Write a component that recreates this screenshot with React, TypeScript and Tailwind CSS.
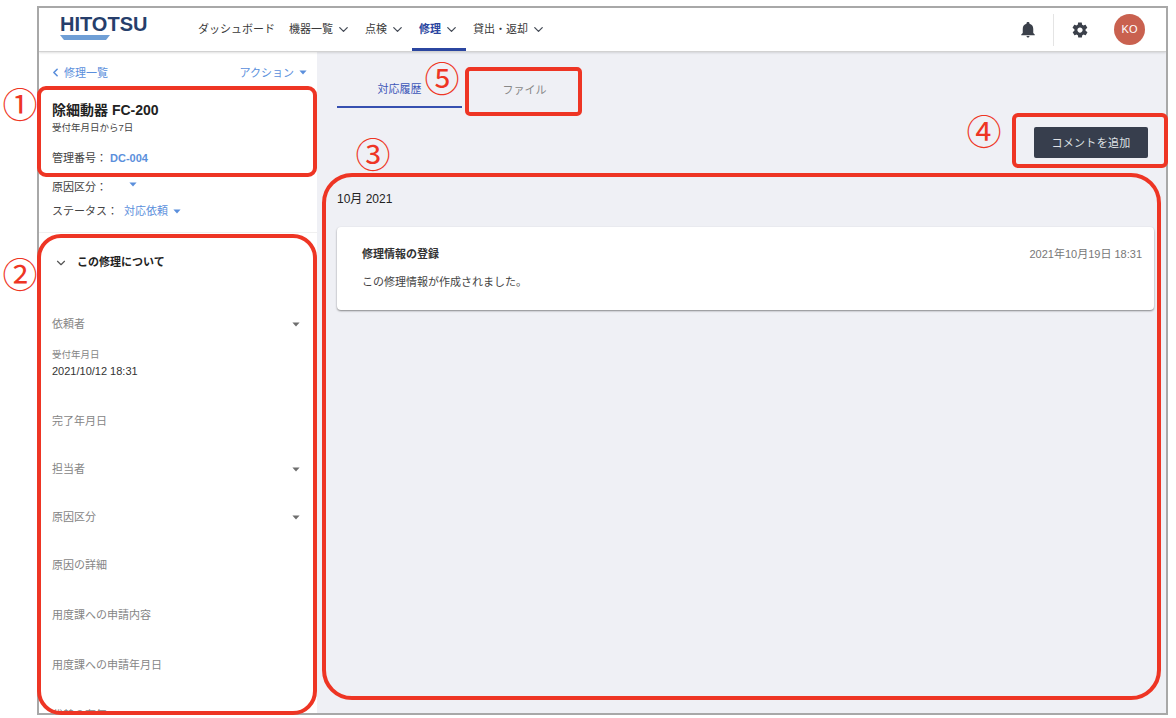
import React from "react";
import { ChevronDown, ChevronLeft } from "lucide-react";

const Caret = ({ className = "" }: { className?: string }) => (
  <svg viewBox="0 0 10 6" className={`h-[5px] w-[8px] ${className}`} fill="currentColor">
    <path d="M0.5 0.5h9L5 5.5z" />
  </svg>
);

const Bell = () => (
  <svg viewBox="0 0 24 24" className="h-[18px] w-[18px] text-[#3b404a]" fill="currentColor">
    <path d="M12 22c1.2 0 2-.9 2-2h-4c0 1.1.8 2 2 2zm7-6v-5.5c0-3.4-1.8-6.1-5-6.8V3c0-1-.9-1.6-2-1.6S10 2 10 3v.7c-3.2.7-5 3.4-5 6.8V16l-2 2v1h18v-1l-2-2z" />
  </svg>
);

const Gear = () => (
  <svg viewBox="0 0 24 24" className="h-[18px] w-[18px] text-[#3b404a]" fill="currentColor">
    <path d="M19.4 13c.1-.3.1-.7.1-1s0-.7-.1-1l2.1-1.6c.2-.2.2-.4.1-.6l-2-3.5c-.1-.2-.4-.3-.6-.2l-2.5 1c-.5-.4-1.1-.7-1.7-1l-.4-2.7c0-.2-.2-.4-.5-.4h-4c-.3 0-.5.2-.5.4l-.4 2.7c-.6.3-1.2.6-1.7 1l-2.5-1c-.2-.1-.5 0-.6.2l-2 3.5c-.1.2-.1.5.1.6L4.6 11c-.1.3-.1.7-.1 1s0 .7.1 1l-2.1 1.6c-.2.2-.2.4-.1.6l2 3.5c.1.2.4.3.6.2l2.5-1c.5.4 1.1.7 1.7 1l.4 2.7c0 .2.2.4.5.4h4c.3 0 .5-.2.5-.4l.4-2.7c.6-.3 1.2-.6 1.7-1l2.5 1c.2.1.5 0 .6-.2l2-3.5c.1-.2.1-.5-.1-.6L19.4 13zM12 15.5c-1.9 0-3.5-1.6-3.5-3.5s1.6-3.5 3.5-3.5 3.5 1.6 3.5 3.5-1.6 3.5-3.5 3.5z" />
  </svg>
);

const Logo = () => (
  <div className="ml-[21px] flex w-[88px] flex-col">
    <span className="text-[20px] font-bold leading-[22px] text-[#263e6b]">HITOTSU</span>
    <svg viewBox="0 0 50 5" className="h-[5px] w-[50px]" preserveAspectRatio="none">
      <path d="M0 0H50L46 5H4z" fill="#6f9fd6" />
    </svg>
  </div>
);

const navItems = [
  { label: "ダッシュボード" },
  { label: "機器一覧", arrow: true },
  { label: "点検", arrow: true },
  { label: "修理", arrow: true, active: true },
  { label: "貸出・返却", arrow: true },
];

const Field = ({ label, h, caret }: { label: string; h: string; caret?: boolean }) => (
  <div className={`flex items-center justify-between pr-[8px] text-[11px] text-[#858585] ${h}`}>
    <span>{label}</span>
    {caret && <Caret className="text-[#6e6e6e]" />}
  </div>
);

const Annotation = ({ className }: { className: string }) => (
  <div className={`pointer-events-none absolute border-[4px] border-[#ee3524] ${className}`} />
);

const Num = ({ className, children }: { className: string; children: React.ReactNode }) => (
  <div className={`pointer-events-none absolute flex h-[40px] w-[40px] items-center justify-center text-[35px] leading-none text-[#ee3524] ${className}`}>
    {children}
  </div>
);

export default function App() {
  return (
    <div className="relative h-[718px] w-[1176px] overflow-hidden bg-white pl-[37px] pt-[6px] font-['Liberation_Sans','Noto_Sans_CJK_JP',sans-serif]">
      <div className="flex h-[709px] w-[1131px] flex-col overflow-hidden border-2 border-[#a8a8a8] bg-[#eff0f5]">
        <header className="z-10 flex h-[44px] shrink-0 items-stretch border-b border-[#d2d2d2] bg-white shadow-[0_1px_2px_rgba(0,0,0,0.12)]">
          <div className="flex w-[152px] items-center pb-[7px]">
            <Logo />
          </div>
          <nav className="flex items-stretch text-[11px] text-[#3a3a3a]">
            {navItems.map((n) => (
              <div
                key={n.label}
                className={`flex items-center gap-[3px] px-[7px] pb-[1px] ${n.active ? "border-b-[3px] border-[#2b46a0] pt-[3px] font-bold text-[#2b46a0]" : ""}`}
              >
                <span>{n.label}</span>
                {n.arrow && <ChevronDown className="h-[15px] w-[15px] text-[#444a55]" strokeWidth={2} />}
              </div>
            ))}
          </nav>
          <div className="ml-auto flex items-center">
            <div className="flex h-[32px] items-center border-r border-[#e4e4e4] pr-[16px]">
              <Bell />
            </div>
            <div className="ml-[17px]">
              <Gear />
            </div>
            <div className="ml-[25px] mr-[21px] flex h-[31px] w-[31px] items-center justify-center rounded-full bg-[#c9614f] text-[11px] text-white">
              KO
            </div>
          </div>
        </header>

        <div className="flex min-h-0 flex-1">
          <aside className="w-[278px] shrink-0 overflow-hidden bg-white pl-[13px] pr-[9px] text-[#333]">
            <div className="flex h-[33px] items-end justify-between pb-[4px] text-[11px] text-[#5b8fdc]">
              <span className="flex items-center gap-[2px]">
                <ChevronLeft className="-ml-[3px] h-[13px] w-[13px]" strokeWidth={3} />
                修理一覧
              </span>
              <span className="flex items-center gap-[5px] pr-[1px]">
                アクション
                <Caret />
              </span>
            </div>
            <div className="mt-[14px] text-[14px] font-bold leading-[22px] text-[#222]">除細動器 FC-200</div>
            <div className="text-[9.5px] leading-[13px] text-[#444]">受付年月日から7日</div>
            <div className="mt-[17px] flex h-[14px] items-center text-[11px] text-[#444]">
              管理番号：
              <span className="ml-[3px] font-bold text-[#5b8fdc]">DC-004</span>
            </div>
            <div className="mt-[13px] flex h-[16px] text-[11px] text-[#444]">
              <span className="mt-[1px]">原因区分：</span>
              <Caret className="ml-[22px] mt-[4px] text-[#5b8fdc]" />
            </div>
            <div className="mt-[9px] flex h-[16px] items-center text-[11px] text-[#444]">
              ステータス：
              <span className="ml-[6px] text-[#5b8fdc]">対応依頼</span>
              <Caret className="ml-[5px] text-[#5b8fdc]" />
            </div>
            <div className="-ml-[13px] -mr-[9px] mt-[13px] border-t border-[#f0f0f0]" />
            <div className="flex h-[59px] items-center gap-[9px] pl-[2px] text-[11px] font-bold text-[#222]">
              <ChevronDown className="h-[14px] w-[14px] text-[#555]" strokeWidth={2} />
              この修理について
            </div>
            <div className="mt-[16px]" />
            <Field label="依頼者" h="h-[32px]" caret />
            <div className="mt-[8px] text-[9.5px] leading-[14px] text-[#858585]">受付年月日</div>
            <div className="mt-[2px] text-[11px] leading-[15px] text-[#333]">2021/10/12 18:31</div>
            <div className="mt-[26px]" />
            <Field label="完了年月日" h="h-[32px]" />
            <div className="mt-[16px]" />
            <Field label="担当者" h="h-[32px]" caret />
            <div className="mt-[16px]" />
            <Field label="原因区分" h="h-[32px]" caret />
            <div className="mt-[16px]" />
            <Field label="原因の詳細" h="h-[32px]" />
            <div className="mt-[18px]" />
            <Field label="用度課への申請内容" h="h-[32px]" />
            <div className="mt-[18px]" />
            <Field label="用度課への申請年月日" h="h-[32px]" />
            <div className="mt-[18px]" />
            <Field label="代替の有無" h="h-[32px]" />
          </aside>

          <main className="min-w-0 flex-1 pl-[20px] pr-[12px]">
            <div className="flex h-[56px] items-end text-[11px]">
              <div className="flex h-[38px] w-[125px] items-center justify-center border-b-2 border-[#3650b0] pt-[3px] text-[#3d57b8]">
                対応履歴
              </div>
              <div className="flex h-[38px] w-[125px] items-center justify-center pt-[3px] text-[#888]">ファイル</div>
            </div>
            <div className="mt-[19px] flex justify-end pr-[6px]">
              <button className="flex h-[31px] w-[114px] items-center justify-center rounded-[2px] bg-[#373e4d] pt-[1px] text-[11px] tracking-[0.3px] text-[#dfe1e5]">
                コメントを追加
              </button>
            </div>
            <div className="mt-[33px] text-[12px] leading-[16px] text-[#222]">10月 2021</div>
            <div className="mt-[20px] h-[83px] rounded-[4px] bg-white pl-[25px] pr-[12px] pt-[20px] shadow-[0_1px_2px_rgba(0,0,0,0.45)]">
              <div className="flex items-center justify-between text-[11px] leading-[14px]">
                <span className="font-bold text-[#333]">修理情報の登録</span>
                <span className="text-[#777]">2021年10月19日 18:31</span>
              </div>
              <div className="mt-[14px] text-[11px] leading-[14px] text-[#444]">この修理情報が作成されました。</div>
            </div>
          </main>
        </div>
      </div>

      <Annotation className="left-[37px] top-[86px] h-[91px] w-[280px] rounded-[9px]" />
      <Annotation className="left-[37px] top-[234px] h-[481px] w-[280px] rounded-[24px]" />
      <Annotation className="left-[322px] top-[173px] h-[527px] w-[839px] rounded-[30px]" />
      <Annotation className="left-[1012px] top-[113px] h-[55px] w-[156px] rounded-[6px]" />
      <Annotation className="left-[465px] top-[67px] h-[49px] w-[117px] rounded-[5px]" />
      <Num className="left-[0px] top-[85px]">①</Num>
      <Num className="left-[0px] top-[255px]">②</Num>
      <Num className="left-[353px] top-[135px]">③</Num>
      <Num className="left-[964px] top-[112px]">④</Num>
      <Num className="left-[422px] top-[59px]">⑤</Num>
    </div>
  );
}
